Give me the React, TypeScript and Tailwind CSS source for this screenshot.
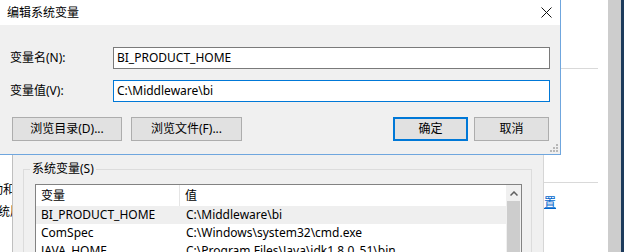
import React from "react";

const FONT = "font-['Segoe_UI','Noto_Sans','Noto_Sans_CJK_SC',sans-serif]";

function WinButton({ label, className }: { label: string; className: string }) {
  return (
    <div
      className={`h-[24px] flex items-center justify-center bg-[#e1e1e1] text-[12px] text-black ${className}`}
    >
      {label}
    </div>
  );
}

export default function App() {
  return (
    <div className={`relative w-[624px] h-[252px] overflow-hidden bg-white text-black text-[12px] ${FONT}`}>
      {/* Background windows */}
      <div className="flex h-full">
        <div className="w-[608px] flex h-full">
          {/* left clipped strip of the system properties window */}
          <div className="w-[12px] bg-white overflow-hidden flex flex-col">
            <div className="mt-[181px] h-[18px] leading-[18px] whitespace-nowrap ml-[-9px]">动和</div>
            <div className="mt-[4px] h-[18px] leading-[18px] whitespace-nowrap ml-[-2px]">统属</div>
          </div>
          <div className="w-px bg-[#bfbfbf]" />
          {/* environment variables window */}
          <div className="w-[530px] bg-[#f0f0f0] pl-[10px] pr-[11px] pt-[169px]">
            <div className="relative h-[120px] border border-[#dcdcdc]">
              <div className="absolute left-[6px] top-[-9px] px-[2px] bg-[#f0f0f0] leading-[16px]">系统变量(S)</div>
              <div className="mt-[14px] ml-[11px] mr-[9px] h-[100px] border border-[#828282] bg-white flex">
                <div className="flex-1 flex flex-col">
                  <div className="h-[21px] flex items-center bg-white">
                    <div className="w-[144px] h-full flex items-center pl-[5px] border-r border-[#e5e5e5]">变量</div>
                    <div className="pl-[5px]">值</div>
                  </div>
                  <div className="h-[18px] flex items-center bg-[#efefef]">
                    <div className="w-[144px] pl-[5px]">BI_PRODUCT_HOME</div>
                    <div className="pl-[6px] whitespace-nowrap">C:\Middleware\bi</div>
                  </div>
                  <div className="h-[18px] flex items-center">
                    <div className="w-[144px] pl-[5px]">ComSpec</div>
                    <div className="pl-[6px] whitespace-nowrap">C:\Windows\system32\cmd.exe</div>
                  </div>
                  <div className="h-[18px] flex items-center">
                    <div className="w-[144px] pl-[5px]">JAVA_HOME</div>
                    <div className="pl-[6px] whitespace-nowrap">C:\Program Files\Java\jdk1.8.0_51\bin</div>
                  </div>
                </div>
                <div className="w-[15px] bg-[#f0f0f0] flex flex-col">
                  <div className="h-[16px] flex items-center justify-center">
                    <svg width="8" height="5" viewBox="0 0 8 5">
                      <path d="M0.5 4.5 L4 1 L7.5 4.5" fill="none" stroke="#606060" strokeWidth="1.5" />
                    </svg>
                  </div>
                  <div className="flex-1 mx-px bg-[#cdcdcd]" />
                </div>
              </div>
            </div>
          </div>
          <div className="w-px bg-[#d6d6d6]" />
          {/* white area at right */}
          <div className="flex-1 bg-white flex flex-col">
            <div className="mt-[68px] h-px w-[54px] bg-[#d9d9d9]" />
            <div className="mt-[113px] h-px w-[54px] bg-[#d9d9d9]" />
            <div className="mt-[12px] leading-[16px] text-[#0066cc] underline">置</div>
          </div>
        </div>
        <div className="w-[13px] bg-[#cdcdcd]" />
        <div className="w-[3px] bg-[#1d3b5c]" />
      </div>

      {/* Edit system variable dialog, lying over the windows behind */}
      <div className="absolute left-0 top-0 w-[561px] h-[155px] bg-[#f0f0f0] border-r border-b border-[#6fa6de] flex flex-col">
        <div className="h-[25px] bg-white flex items-center justify-between pl-[7px] pr-[8px]">
          <span className="leading-[16px]">编辑系统变量</span>
          <svg width="11" height="11" viewBox="0 0 11 11">
            <path d="M0.5 0.5 L10.5 10.5 M10.5 0.5 L0.5 10.5" stroke="#111" strokeWidth="1" fill="none" />
          </svg>
        </div>
        <div className="flex-1 px-[10px] flex flex-col">
          <div className="mt-[22px] h-[22px] flex items-center">
            <div className="w-[103px]">变量名(N):</div>
            <div className="flex-1 h-full border border-[#7a7a7a] bg-white flex items-center pl-[3px]">
              BI_PRODUCT_HOME
            </div>
          </div>
          <div className="mt-[11px] h-[22px] flex items-center">
            <div className="w-[103px]">变量值(V):</div>
            <div className="flex-1 h-full border border-[#0078d7] bg-white flex items-center pl-[3px]">
              C:\Middleware\bi
            </div>
          </div>
          <div className="mt-[15px] flex items-center">
            <WinButton label="浏览目录(D)..." className="ml-[2px] w-[110px] border border-[#adadad]" />
            <WinButton label="浏览文件(F)..." className="ml-[9px] w-[111px] border border-[#adadad]" />
            <div className="flex-1" />
            <WinButton label="确定" className="w-[75px] border-2 border-[#0078d7]" />
            <WinButton label="取消" className="ml-[6px] w-[75px] mr-px border border-[#adadad]" />
          </div>
        </div>
        <svg className="absolute right-[2px] bottom-[2px]" width="8" height="8" viewBox="0 0 8 8">
          <rect x="6" y="0" width="2" height="2" fill="#b8b8b8" />
          <rect x="3" y="3" width="2" height="2" fill="#b8b8b8" />
          <rect x="6" y="3" width="2" height="2" fill="#b8b8b8" />
          <rect x="0" y="6" width="2" height="2" fill="#b8b8b8" />
          <rect x="3" y="6" width="2" height="2" fill="#b8b8b8" />
          <rect x="6" y="6" width="2" height="2" fill="#b8b8b8" />
        </svg>
      </div>
    </div>
  );
}
